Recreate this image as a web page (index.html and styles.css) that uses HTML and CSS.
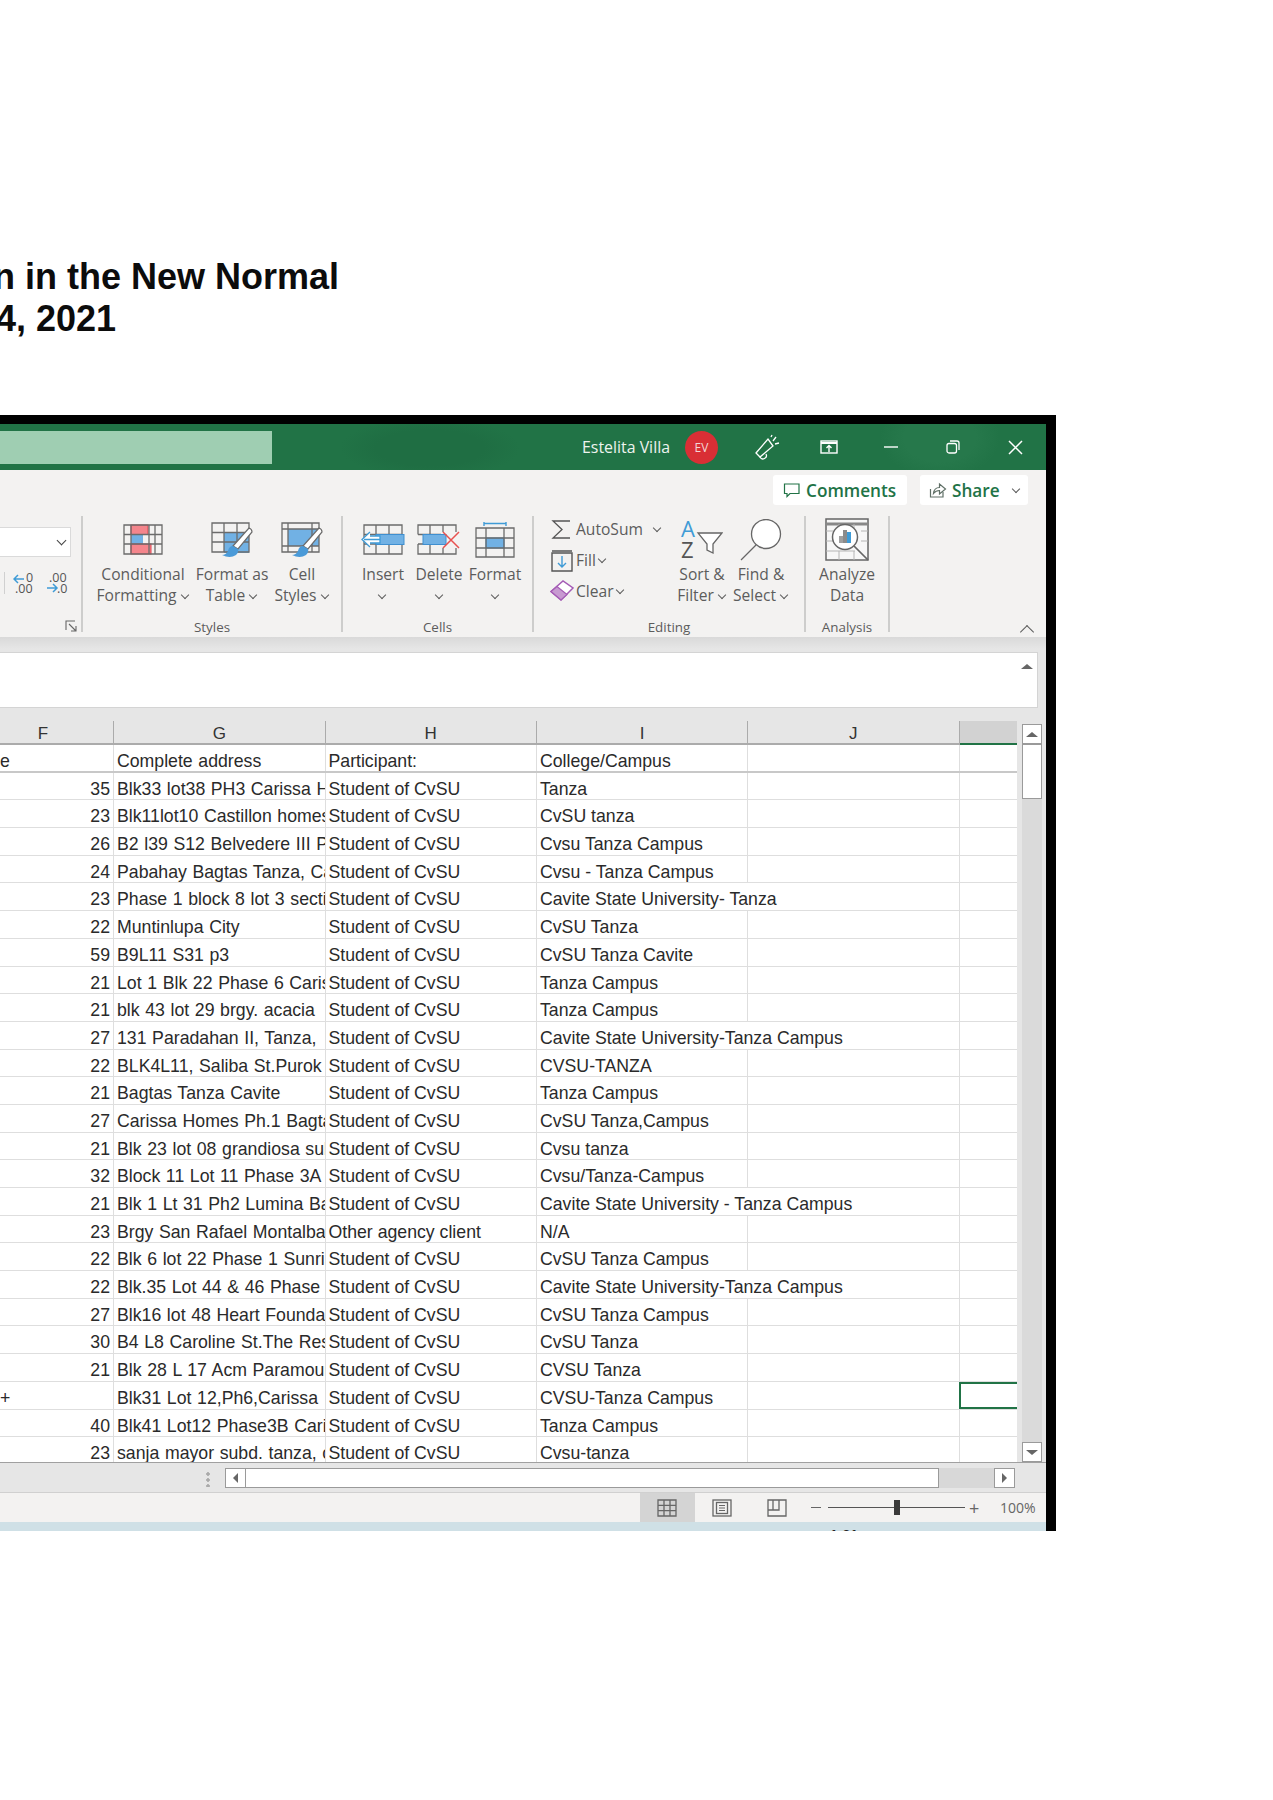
FILE: index.html
```html
<!doctype html>
<html>
<head>
  <title>Excel sheet capture</title>
  <link rel="stylesheet" href="styles.css">
</head>
<body>
<div class="page-title">
	<div class="title-line">n in the New Normal</div>
	<div class="title-line title-date">4, 2021</div>
</div>

<div class="window">
	<!-- title bar -->
	<div class="titlebar">
		<div class="searchbox"></div>
		<div class="user-name">Estelita Villa</div>
		<div class="avatar">EV</div>
		<div class="tb-btn"><svg width="26" height="26" viewBox="0 0 26 26" fill="none" stroke="#fff" stroke-width="1.3"><path d="M2 19 L14 5 L19 12 L6 23 Z"/><path d="M6 23 a3 3 0 0 0 6-3"/><path d="M19 7 l3-4 M21 10 l4-1 M17 3 l1-2"/></svg></div>
		<div class="tb-btn"><svg width="18" height="14" viewBox="0 0 18 14" fill="none" stroke="#fff" stroke-width="1.4"><rect x="1" y="1" width="16" height="12"/><path d="M1 3 H17" stroke-width="2"/><path d="M9 12 V6 M6.5 8 L9 5.5 L11.5 8"/></svg></div>
		<div class="tb-btn"><svg width="14" height="14" viewBox="0 0 14 14" stroke="#fff" stroke-width="1.4"><path d="M0 7 H14"/></svg></div>
		<div class="tb-btn"><svg width="14" height="14" viewBox="0 0 14 14" fill="none" stroke="#fff" stroke-width="1.3"><rect x="1" y="3.5" width="9.5" height="9.5" rx="2"/><path d="M4 1 H11 a2 2 0 0 1 2 2 V10"/></svg></div>
		<div class="tb-btn"><svg width="15" height="15" viewBox="0 0 15 15" stroke="#fff" stroke-width="1.5"><path d="M1 1 L14 14 M14 1 L1 14"/></svg></div>
	</div>

	<!-- ribbon -->
	<div class="ribbon">
		<div class="ribbon-top">
			<div class="top-btn btn-comments">
				<svg width="18" height="18" viewBox="0 0 18 18" fill="none" stroke="#217346" stroke-width="1.2"><path d="M1.5 3 H16 V12.5 H7 L4 15.5 V12.5 H1.5 Z"/></svg>
				Comments
			</div>
			<div class="top-btn btn-share">
				<svg width="18" height="18" viewBox="0 0 18 18" fill="none" stroke="#5f6f66" stroke-width="1.2"><path d="M1.5 8 V16 H14 V11"/><path d="M4.5 12.5 C5 8 8 6.5 10.5 6.5 V3 L16.5 8 L10.5 13 V9.5 C8 9.5 6 10.5 4.5 12.5 Z"/></svg>
				Share
				<span class="chev chev-share"></span>
			</div>
		</div>

		<div class="groups">
			<div class="group group-number">
				<div class="number-body">
					<div class="num-select"><span class="chev chev-dark"></span></div>
					<div class="decimals">
						<svg class="dec" width="23" height="22" viewBox="0 0 23 22"><path d="M11 7 H1 M5 3 L1 7 L5 11" fill="none" stroke="#3f9bd6" stroke-width="1.5"/><text x="13" y="10" class="dec-text">0</text><text x="2" y="21" class="dec-text">.00</text></svg>
						<svg class="dec" width="23" height="22" viewBox="0 0 23 22"><path d="M1 16 H11 M7 12 L11 16 L7 20" fill="none" stroke="#3f9bd6" stroke-width="1.5"/><text x="3" y="10" class="dec-text">.00</text><text x="11" y="21" class="dec-text">.0</text></svg>
					</div>
				</div>
				<div class="launcher-row">
					<svg width="12" height="12" viewBox="0 0 12 12" fill="none" stroke="#666" stroke-width="1.1"><path d="M1 10 V1 H10"/><path d="M4 4 L11 11 M11 6 V11 H6"/></svg>
				</div>
			</div>

			<div class="group group-styles">
				<div class="group-body">
					<div class="item item-cf">
						<div class="item-icon"><svg width="40" height="31" viewBox="0 0 40 31" fill="none">
							<rect x="8" y="1" width="17" height="9.5" fill="#f4858c" stroke="#e0434f"/>
							<rect x="8" y="11" width="12" height="9" fill="#71b1e4"/>
							<rect x="8" y="20" width="20" height="10" fill="#f4858c" stroke="#e0434f"/>
							<path d="M1 1 H39 V30 H1 Z M1 10.5 H39 M1 20 H39 M8 1 V30 M26 1 V30 M32 1 V30" stroke="#6b6b6b" stroke-width="1.3"/>
						</svg></div>
						<div class="item-text">Conditional<br>Formatting <span class="chev"></span></div>
					</div>
					<div class="item item-ft">
						<div class="item-icon"><svg width="42" height="36" viewBox="0 0 42 36" fill="none">
							<rect x="13" y="11" width="25" height="20" fill="#71b1e4"/>
							<path d="M1 1 H38 V30 H1 Z M1 10.5 H38 M1 20 H38 M13 1 V30 M26 1 V30" stroke="#6b6b6b" stroke-width="1.3"/>
							<path d="M22 24 L38 6 Q41 7 41 10 L27 27 Z" fill="#fff" stroke="#6b6b6b" stroke-width="1.2"/>
							<path d="M22 24 Q18 24 17 29 Q15 33 11 33 Q19 37 25 33 Q28 30 27 27 Z" fill="#4a9ad8"/>
						</svg></div>
						<div class="item-text">Format as<br>Table <span class="chev"></span></div>
					</div>
					<div class="item item-cs">
						<div class="item-icon"><svg width="42" height="36" viewBox="0 0 42 36" fill="none">
							<rect x="7" y="7" width="31" height="17" fill="#71b1e4"/>
							<path d="M1 1 H38 V30 H1 Z M1 7 H38 M1 24 H38 M7 1 V30 M31 1 V30" stroke="#6b6b6b" stroke-width="1.3"/>
							<path d="M22 24 L38 6 Q41 7 41 10 L27 27 Z" fill="#fff" stroke="#6b6b6b" stroke-width="1.2"/>
							<path d="M22 24 Q18 24 17 29 Q15 33 11 33 Q19 37 25 33 Q28 30 27 27 Z" fill="#4a9ad8"/>
						</svg></div>
						<div class="item-text">Cell<br>Styles <span class="chev"></span></div>
					</div>
				</div>
				<div class="group-label">Styles</div>
			</div>

			<div class="group group-cells">
				<div class="group-body">
					<div class="item item-cell">
						<div class="item-icon"><svg width="44" height="31" viewBox="0 0 44 31" fill="none">
							<path d="M3 1 H41 V30 H3 Z M3 10.5 H41 M3 20 H41 M15 1 V30 M28 1 V30" stroke="#6b6b6b" stroke-width="1.3"/>
							<rect x="15" y="10.5" width="28" height="10" fill="#71b1e4" stroke="#3f8fd0"/>
							<path d="M19 15.5 H3 M9 8 L1 15.5 L9 23 M9 12 H19 V19 H9" fill="#fff" stroke="#3f9bd6" stroke-width="1.3"/>
						</svg></div>
						<div class="item-text">Insert<br><span class="chev"></span></div>
					</div>
					<div class="item item-cell">
						<div class="item-icon"><svg width="44" height="31" viewBox="0 0 44 31" fill="none">
							<path d="M1 10.5 V1 H39 V8 M1 20 V30 H39 V24 M1 10.5 H24 M1 20 H24 M13 1 V30 M26 1 V8 M26 24 V30" stroke="#6b6b6b" stroke-width="1.3"/>
							<rect x="6" y="10.5" width="23" height="10" fill="#71b1e4" stroke="#3f8fd0"/>
							<path d="M26 8 L42 24 M42 8 L26 24" stroke="#e8504f" stroke-width="1.5"/>
						</svg></div>
						<div class="item-text">Delete<br><span class="chev"></span></div>
					</div>
					<div class="item item-cell">
						<div class="item-icon"><svg width="40" height="36" viewBox="0 0 40 36" fill="none">
							<path d="M9 1.5 H31 M9 0 V4 M31 0 V4" stroke="#3f9bd6" stroke-width="1.4"/>
							<rect x="11" y="16" width="18" height="10" fill="#71b1e4" stroke="#3f8fd0"/>
							<path d="M1 6 H39 V35 H1 Z M1 16 H39 M1 26 H39 M11 6 V35 M29 6 V35" stroke="#6b6b6b" stroke-width="1.3"/>
						</svg></div>
						<div class="item-text">Format<br><span class="chev"></span></div>
					</div>
				</div>
				<div class="group-label">Cells</div>
			</div>

			<div class="group group-editing">
				<div class="group-body">
					<div class="edit-list">
						<div class="edit-row">
							<svg width="24" height="24" viewBox="0 0 24 24" fill="none" stroke="#555" stroke-width="1.3"><path d="M20 4 H3 L12 12.5 L3 21 H20"/></svg>
							AutoSum <span class="chev chev-autosum"></span>
						</div>
						<div class="edit-row">
							<svg width="24" height="24" viewBox="0 0 24 24" fill="none"><path d="M2 5 H22 V23 H2 Z M2 3 H22" stroke="#555" stroke-width="1.4"/><path d="M12 8 V19 M8 15 L12 19 L16 15" stroke="#3f9bd6" stroke-width="1.4"/></svg>
							Fill <span class="chev"></span>
						</div>
						<div class="edit-row">
							<svg width="24" height="24" viewBox="0 0 24 24" fill="none"><path d="M1 12.5 L13 2 L23 9 L11 21 Z" fill="#fff" stroke="#a45bb5" stroke-width="1.5"/><path d="M1 12.5 L7 7.5 L17 15.5 L11 21 Z" fill="#c79ad1" stroke="#a45bb5" stroke-width="1.2"/></svg>
							Clear <span class="chev"></span>
						</div>
					</div>
					<div class="item item-sort">
						<div class="item-icon"><svg width="42" height="40" viewBox="0 0 42 40" fill="none">
							<text x="0" y="17" class="az az-a">A</text>
							<text x="0" y="38" class="az az-z">Z</text>
							<path d="M17 13 H41 L32 24 V33 L26 30 V24 Z" fill="#fff" stroke="#666" stroke-width="1.3"/>
						</svg></div>
						<div class="item-text">Sort &amp;<br>Filter <span class="chev"></span></div>
					</div>
					<div class="item item-find">
						<div class="item-icon"><svg width="42" height="42" viewBox="0 0 42 42" fill="none" stroke="#666" stroke-width="1.3"><circle cx="26" cy="15" r="14.5" fill="#fff"/><path d="M16 26 L1 41"/></svg></div>
						<div class="item-text">Find &amp;<br>Select <span class="chev"></span></div>
					</div>
				</div>
				<div class="group-label">Editing</div>
			</div>

			<div class="group group-analysis">
				<div class="group-body">
					<div class="item item-analyze">
						<div class="item-icon"><svg width="44" height="44" viewBox="0 0 44 44" fill="none">
							<rect x="1" y="1" width="42" height="41" fill="#f7f7f7" stroke="#666" stroke-width="1.5"/>
							<path d="M1 6 H43" stroke="#888" stroke-width="3"/>
							<path d="M1 13 H8 M36 13 H43 M1 23 H8 M36 23 H43 M1 33 H30 M14 33 V42 M29 33 V42 M14 6 V10 M29 6 V10" stroke="#b5b5b5"/>
							<circle cx="20" cy="19" r="12.5" fill="#fff" stroke="#666" stroke-width="1.5"/>
							<rect x="14" y="18" width="4" height="7" fill="#a0a0a0"/>
							<rect x="18" y="12" width="4" height="13" fill="#8b8b8b"/>
							<rect x="22" y="14" width="4" height="11" fill="#3f9bd6"/>
							<path d="M29 28 L43 42" stroke="#666" stroke-width="1.7"/>
						</svg></div>
						<div class="item-text">Analyze<br>Data</div>
					</div>
				</div>
				<div class="group-label">Analysis</div>
			</div>

			<div class="ribbon-end"><span class="chev chev-up"></span></div>
		</div>
	</div>

	<!-- formula bar -->
	<div class="formula-zone">
		<div class="formula-box"><span class="tri tri-up"></span></div>
	</div>

	<!-- sheet -->
	<div class="sheet">
		<div class="grid">
			<div class="row row-head">
				<div class="cell head-f">F</div><div class="cell">G</div><div class="cell">H</div><div class="cell">I</div><div class="cell">J</div><div class="cell head-k"></div>
			</div>
			<div class="row row-first"><div class="cell left">e</div><div class="cell">Complete address</div><div class="cell">Participant:</div><div class="cell">College/Campus</div><div class="cell"></div><div class="cell"></div></div>
			<div class="row"><div class="cell num">35</div><div class="cell">Blk33 lot38 PH3 Carissa Homes</div><div class="cell">Student of CvSU</div><div class="cell">Tanza</div><div class="cell"></div><div class="cell"></div></div>
			<div class="row"><div class="cell num">23</div><div class="cell">Blk11lot10 Castillon homes Tanza</div><div class="cell">Student of CvSU</div><div class="cell">CvSU tanza</div><div class="cell"></div><div class="cell"></div></div>
			<div class="row"><div class="cell num">26</div><div class="cell">B2 l39 S12 Belvedere III Phase</div><div class="cell">Student of CvSU</div><div class="cell">Cvsu Tanza Campus</div><div class="cell"></div><div class="cell"></div></div>
			<div class="row"><div class="cell num">24</div><div class="cell">Pabahay Bagtas Tanza, Cavite</div><div class="cell">Student of CvSU</div><div class="cell">Cvsu - Tanza Campus</div><div class="cell"></div><div class="cell"></div></div>
			<div class="row"><div class="cell num">23</div><div class="cell">Phase 1 block 8 lot 3 section</div><div class="cell">Student of CvSU</div><div class="cell wide">Cavite State University- Tanza</div><div class="cell"></div><div class="cell"></div></div>
			<div class="row"><div class="cell num">22</div><div class="cell">Muntinlupa City</div><div class="cell">Student of CvSU</div><div class="cell">CvSU Tanza</div><div class="cell"></div><div class="cell"></div></div>
			<div class="row"><div class="cell num">59</div><div class="cell">B9L11 S31 p3</div><div class="cell">Student of CvSU</div><div class="cell">CvSU Tanza Cavite</div><div class="cell"></div><div class="cell"></div></div>
			<div class="row"><div class="cell num">21</div><div class="cell">Lot 1 Blk 22 Phase 6 Carissa</div><div class="cell">Student of CvSU</div><div class="cell">Tanza Campus</div><div class="cell"></div><div class="cell"></div></div>
			<div class="row"><div class="cell num">21</div><div class="cell">blk 43 lot 29 brgy. acacia</div><div class="cell">Student of CvSU</div><div class="cell">Tanza Campus</div><div class="cell"></div><div class="cell"></div></div>
			<div class="row"><div class="cell num">27</div><div class="cell">131 Paradahan II, Tanza,</div><div class="cell">Student of CvSU</div><div class="cell wide">Cavite State University-Tanza Campus</div><div class="cell"></div><div class="cell"></div></div>
			<div class="row"><div class="cell num">22</div><div class="cell">BLK4L11, Saliba St.Purok 5</div><div class="cell">Student of CvSU</div><div class="cell">CVSU-TANZA</div><div class="cell"></div><div class="cell"></div></div>
			<div class="row"><div class="cell num">21</div><div class="cell">Bagtas Tanza Cavite</div><div class="cell">Student of CvSU</div><div class="cell">Tanza Campus</div><div class="cell"></div><div class="cell"></div></div>
			<div class="row"><div class="cell num">27</div><div class="cell">Carissa Homes Ph.1 Bagtas</div><div class="cell">Student of CvSU</div><div class="cell">CvSU Tanza,Campus</div><div class="cell"></div><div class="cell"></div></div>
			<div class="row"><div class="cell num">21</div><div class="cell">Blk 23 lot 08 grandiosa subd</div><div class="cell">Student of CvSU</div><div class="cell">Cvsu tanza</div><div class="cell"></div><div class="cell"></div></div>
			<div class="row"><div class="cell num">32</div><div class="cell">Block 11 Lot 11 Phase 3A</div><div class="cell">Student of CvSU</div><div class="cell">Cvsu/Tanza-Campus</div><div class="cell"></div><div class="cell"></div></div>
			<div class="row"><div class="cell num">21</div><div class="cell">Blk 1 Lt 31 Ph2 Lumina Bagtas</div><div class="cell">Student of CvSU</div><div class="cell wide">Cavite State University - Tanza Campus</div><div class="cell"></div><div class="cell"></div></div>
			<div class="row"><div class="cell num">23</div><div class="cell">Brgy San Rafael Montalban</div><div class="cell">Other agency client</div><div class="cell">N/A</div><div class="cell"></div><div class="cell"></div></div>
			<div class="row"><div class="cell num">22</div><div class="cell">Blk 6 lot 22 Phase 1 Sunrise</div><div class="cell">Student of CvSU</div><div class="cell">CvSU Tanza Campus</div><div class="cell"></div><div class="cell"></div></div>
			<div class="row"><div class="cell num">22</div><div class="cell">Blk.35 Lot 44 &amp; 46 Phase</div><div class="cell">Student of CvSU</div><div class="cell wide">Cavite State University-Tanza Campus</div><div class="cell"></div><div class="cell"></div></div>
			<div class="row"><div class="cell num">27</div><div class="cell">Blk16 lot 48 Heart Foundation</div><div class="cell">Student of CvSU</div><div class="cell">CvSU Tanza Campus</div><div class="cell"></div><div class="cell"></div></div>
			<div class="row"><div class="cell num">30</div><div class="cell">B4 L8 Caroline St.The Residences</div><div class="cell">Student of CvSU</div><div class="cell">CvSU Tanza</div><div class="cell"></div><div class="cell"></div></div>
			<div class="row"><div class="cell num">21</div><div class="cell">Blk 28 L 17 Acm Paramount</div><div class="cell">Student of CvSU</div><div class="cell">CVSU Tanza</div><div class="cell"></div><div class="cell"></div></div>
			<div class="row"><div class="cell left">+</div><div class="cell">Blk31 Lot 12,Ph6,Carissa</div><div class="cell">Student of CvSU</div><div class="cell">CVSU-Tanza Campus</div><div class="cell"></div><div class="cell selected"></div></div>
			<div class="row"><div class="cell num">40</div><div class="cell">Blk41 Lot12 Phase3B Carissa</div><div class="cell">Student of CvSU</div><div class="cell">Tanza Campus</div><div class="cell"></div><div class="cell"></div></div>
			<div class="row"><div class="cell num">23</div><div class="cell">sanja mayor subd. tanza, cavite</div><div class="cell">Student of CvSU</div><div class="cell">Cvsu-tanza</div><div class="cell"></div><div class="cell"></div></div>
		</div>
		<div class="vscroll">
			<div class="sb-btn"><span class="tri tri-up"></span></div>
			<div class="v-thumb"></div>
			<div class="v-track"></div>
			<div class="sb-btn"><span class="tri tri-down"></span></div>
		</div>
	</div>

	<!-- horizontal scroll -->
	<div class="hscroll">
		<div class="grip"></div>
		<div class="sb-btn"><span class="tri tri-left"></span></div>
		<div class="h-thumb"></div>
		<div class="h-track"></div>
		<div class="sb-btn"><span class="tri tri-right"></span></div>
	</div>

	<!-- status bar -->
	<div class="statusbar">
		<div class="view-btn view-active"><svg width="20" height="20" viewBox="0 0 20 20" fill="none" stroke="#666" stroke-width="1.3"><path d="M1 2 H19 V18 H1 Z M1 7.3 H19 M1 12.6 H19 M7 2 V18 M13 2 V18"/></svg></div>
		<div class="view-btn"><svg width="20" height="20" viewBox="0 0 20 20" fill="none" stroke="#666" stroke-width="1.3"><rect x="1" y="2" width="18" height="16"/><rect x="4.5" y="4.5" width="11" height="11"/><path d="M7 7.5 H13 M7 10 H13 M7 12.5 H13" stroke-width="1"/></svg></div>
		<div class="view-btn"><svg width="20" height="20" viewBox="0 0 20 20" fill="none" stroke="#666" stroke-width="1.3"><path d="M1 2 H19 V18 H1 Z M1 12 H12 V2 M6 2 V12"/></svg></div>
		<div class="zoom-minus"></div>
		<div class="zoom-slider"><div class="zoom-thumb"></div></div>
		<div class="zoom-plus">+</div>
		<div class="zoom-pct">100%</div>
	</div>

	<div class="taskbar"><span class="clock">1:31</span></div>
</div>
</body>
</html>
```

FILE: styles.css
```css
*,
*:before,
*:after {
	box-sizing: border-box;
}

body {
	margin: 0;
	height: 1800px;
	background-color: #fff;
	overflow: hidden;
	font-family: "Open Sans", sans-serif;
}

.page-title {
	padding-top: 255.6px;
	width: 339px;
	font-family: "Liberation Sans", sans-serif;
	font-weight: bold;
	font-size: 36px;
	line-height: 42.4px;
	color: #0c0c0c;
}

.title-line {
	display: flex;
	justify-content: flex-end;
	white-space: nowrap;
	overflow: hidden;
}

.title-date {
	width: 116px;
}

.window {
	margin-top: 74.6px;
	width: 1056px;
	border-top: 9px solid #000;
	border-right: 10px solid #000;
}

/* title bar */

.titlebar {
	display: flex;
	align-items: center;
	height: 46px;
	background-color: #217346;
	background-image: radial-gradient(ellipse 90px 30px at 430px 24px, #1f6e43 60%, transparent 100%), radial-gradient(ellipse 60px 40px at 940px 14px, #26784b 60%, transparent 100%);
	color: #eef4ef;
}

.searchbox {
	width: 272px;
	height: 33px;
	background-color: #9fceb2;
}

.user-name {
	margin-left: auto;
	margin-right: 15px;
	font-size: 15.9px;
}

.avatar {
	display: flex;
	align-items: center;
	justify-content: center;
	width: 33px;
	height: 33px;
	margin-right: 18px;
	border-radius: 50%;
	background-color: #d92f35;
	font-size: 12px;
	color: #f3d6d6;
}

.tb-btn {
	display: flex;
	align-items: center;
	justify-content: center;
	width: 62px;
	height: 46px;
}

/* ribbon */

.ribbon {
	height: 167px;
	background-color: #f3f2f1;
	color: #5c5c5c;
	font-size: 15.6px;
}

.ribbon-top {
	display: flex;
	justify-content: flex-end;
	gap: 13px;
	height: 46px;
	padding: 5px 18px 0 0;
}

.top-btn {
	display: flex;
	align-items: center;
	gap: 5px;
	height: 30px;
	border-radius: 3px;
	background-color: #fff;
	font-size: 17.2px;
	font-weight: 600;
	color: #217346;
}

.btn-comments {
	width: 134px;
	padding-left: 10px;
}

.btn-share {
	width: 108px;
	padding-left: 9px;
}

.groups {
	display: flex;
	height: 116px;
}

.group {
	flex: none;
	display: flex;
	flex-direction: column;
	border-right: 2px solid #cdcdcc;
}

.group-body {
	display: flex;
	height: 101px;
}

.group-label {
	height: 15px;
	line-height: 20px;
	text-align: center;
	font-size: 13.4px;
}

.group-number {
	width: 83px;
}
.group-styles {
	width: 260px;
}
.group-cells {
	width: 191px;
}
.group-editing {
	width: 272px;
}
.group-analysis {
	width: 84px;
}

.group-styles .group-body {
	padding-left: 15px;
}
.group-cells .group-body {
	padding-left: 12px;
}
.group-editing .group-body {
	padding-left: 16px;
}

.item {
	flex: none;
	display: flex;
	flex-direction: column;
	align-items: center;
}

.item-icon {
	display: flex;
	align-items: center;
	justify-content: center;
	height: 47px;
	margin-bottom: 1px;
}

.item-text {
	text-align: center;
	line-height: 21px;
	white-space: nowrap;
}

.item-cf {
	width: 90px;
}
.item-ft {
	width: 72px;
	margin-left: 8px;
}
.item-cs {
	width: 60px;
	margin-left: 3px;
	padding-left: 2px;
}
.item-cell {
	width: 56px;
}
.item-sort {
	width: 62px;
}
.item-find {
	width: 56px;
}
.item-analyze {
	width: 82px;
}

.chev {
	display: inline-block;
	width: 6px;
	height: 6px;
	margin: 0 2px 3px 1px;
	border-right: 1.3px solid #5c5c5c;
	border-bottom: 1.3px solid #5c5c5c;
	transform: rotate(45deg);
}

.chev-share {
	margin: 0 0 3px 8px;
}
.chev-autosum {
	margin-left: 9px;
}
.chev-dark {
	width: 7px;
	height: 7px;
	border-color: #444;
}
.chev-up {
	width: 10px;
	height: 10px;
	margin: 0 -1px -5px 0;
	transform: rotate(-135deg);
}

.number-body {
	height: 101px;
	padding-top: 11px;
	margin-right: 10px;
}

.num-select {
	display: flex;
	align-items: center;
	justify-content: flex-end;
	width: 71px;
	height: 30px;
	padding-right: 3px;
	border: 1px solid #dadada;
	border-left: none;
	background-color: #fff;
}

.decimals {
	display: flex;
	gap: 10px;
	margin-top: 15px;
	margin-left: 4px;
	padding-left: 8px;
	border-left: 1px solid #d0d0d0;
}

.dec-text {
	font-family: "Open Sans", sans-serif;
	font-size: 12.5px;
	fill: #555;
}

.launcher-row {
	display: flex;
	justify-content: flex-end;
	padding: 4px 4px 0 0;
}

.edit-list {
	flex: none;
	width: 121px;
	display: flex;
	flex-direction: column;
	gap: 5px;
}

.edit-row {
	display: flex;
	align-items: center;
	gap: 2px;
	height: 26px;
	white-space: nowrap;
}

.az {
	font-family: "Open Sans", sans-serif;
	font-size: 22px;
}
.az-a {
	fill: #3f9bd6;
}
.az-z {
	fill: #555;
}

.ribbon-end {
	flex: 1;
	display: flex;
	justify-content: flex-end;
	align-items: flex-end;
	padding: 0 15px 0 0;
}

/* formula bar */

.formula-zone {
	height: 84px;
	padding: 15px 8px 13px 0;
	background: linear-gradient(#d9d9d9, #e6e6e6 12px);
}

.formula-box {
	display: flex;
	justify-content: flex-end;
	height: 56px;
	padding: 11px 4px 0 0;
	border: 1.5px solid #d4d4d4;
	border-left: none;
	background-color: #fff;
}

/* sheet */

.sheet {
	display: flex;
	height: 741px;
	background-color: #e6e6e6;
}

.grid {
	flex: none;
	width: 1017px;
	height: 741px;
	overflow: hidden;
	background-color: #fff;
	font-family: "Liberation Sans", sans-serif;
	font-size: 17.7px;
	color: #2a2a2a;
}

.row {
	display: grid;
	grid-template-columns: 114px 211.5px 211.5px 211px 211.5px 57.5px;
	height: 27.7px;
	border-bottom: 1.5px solid #dedede;
}

.cell {
	padding: 4px 0 0 3px;
	border-right: 1.5px solid #dedede;
	line-height: 24px;
	white-space: nowrap;
	overflow: hidden;
}

/* address column sets wider than the rest in the capture */
.cell:nth-child(2) {
	word-spacing: 0.7px;
}

.cell:last-child {
	border-right: none;
}

.num {
	padding-right: 3px;
	text-align: right;
}

.left {
	padding-left: 0;
}

.wide {
	overflow: visible;
	border-right: none;
}

.selected {
	margin-left: -1px;
	border: 2px solid #217346;
}

.row-head {
	height: 24px;
	border-bottom: 2px solid #ababab;
	background-color: #e6e6e6;
	text-align: center;
	font-size: 17px;
	color: #333;
}

.row-head .cell {
	padding: 2px 0 0;
	border-right-color: #ababab;
	line-height: 22px;
}

.row-head .head-f {
	padding-right: 27px;
}

.row-head .head-k {
	margin-bottom: -2px;
	background-color: #d2d2d2;
	border-bottom: 2px solid #217346;
}

.row-first {
	border-bottom: 2px solid #c8c8c8;
}

.vscroll {
	flex: none;
	display: flex;
	flex-direction: column;
	width: 20px;
	height: 738px;
	margin: 3px 0 0 5px;
	background-color: #dadada;
}

.sb-btn {
	flex: none;
	display: flex;
	align-items: center;
	justify-content: center;
	width: 21px;
	height: 20px;
	border: 1.5px solid #9a9a9a;
	background-color: #fff;
}

.vscroll .sb-btn {
	width: 20px;
}

.v-thumb {
	flex: none;
	height: 55px;
	border: 1.5px solid #9a9a9a;
	background-color: #fff;
}

.v-track {
	flex: 1;
}

.tri {
	display: block;
	width: 0;
	height: 0;
	border: 5px solid transparent;
}
.tri-up {
	margin-top: -5px;
	border-bottom: 5px solid #666;
	border-left-width: 6px;
	border-right-width: 6px;
}
.tri-down {
	margin-top: 5px;
	border-top: 5px solid #666;
	border-left-width: 6px;
	border-right-width: 6px;
}
.tri-left {
	margin-left: -5px;
	border-right: 5px solid #666;
}
.tri-right {
	margin-left: 5px;
	border-left: 5px solid #666;
}

.hscroll {
	display: flex;
	align-items: flex-start;
	height: 31px;
	padding: 5px 0 0 206px;
	border-top: 1px solid #a0a0a0;
	border-bottom: 1.5px solid #d0d0d0;
	background-color: #e6e6e6;
}

.grip {
	width: 4px;
	height: 16px;
	margin: 3px 15px 0 0;
	background-image: radial-gradient(circle, #aaa 1.5px, transparent 2px);
	background-size: 4px 6px;
}

.h-thumb {
	flex: none;
	width: 693px;
	height: 20px;
	border: 1.5px solid #9a9a9a;
	border-left: none;
	background-color: #fff;
}

.h-track {
	flex: none;
	width: 55px;
	height: 20px;
	background-color: #d8d8d8;
}

.statusbar {
	display: flex;
	align-items: center;
	height: 29px;
	padding-left: 640px;
	background-color: #f3f2f1;
}

.view-btn {
	display: flex;
	align-items: center;
	justify-content: center;
	width: 55px;
	height: 29px;
	padding-right: 2px;
}

.view-active {
	background-color: #d4d4d4;
}

.zoom-minus {
	width: 10px;
	height: 1.3px;
	margin: 0 7px 0 6px;
	background-color: #666;
}

.zoom-slider {
	position: relative;
	width: 137px;
	height: 1.5px;
	background-color: #555;
}

.zoom-thumb {
	position: absolute;
	left: 66px;
	top: -7px;
	width: 6px;
	height: 15px;
	background-color: #3a3a3a;
}

.zoom-plus {
	width: 18px;
	margin-left: 4px;
	font-size: 18px;
	line-height: 20px;
	color: #666;
}

.zoom-pct {
	margin-left: 13px;
	font-size: 14px;
	color: #666;
}

.taskbar {
	height: 9px;
	padding-left: 830px;
	overflow: hidden;
	background-color: #cfe0e6;
	font-family: "Liberation Sans", sans-serif;
	font-weight: bold;
	font-size: 14px;
	line-height: 26px;
	color: #222;
}
```
